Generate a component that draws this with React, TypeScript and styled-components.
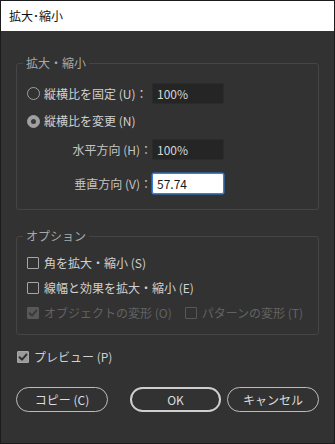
import React from "react";
import styled, { createGlobalStyle, css } from "styled-components";

const GlobalStyle = createGlobalStyle`
  html, body { margin: 0; padding: 0; background: #323232; }
  * { box-sizing: border-box; }
`;

const FONT = `"Noto Sans CJK JP", "Noto Sans", sans-serif`;

const Dialog = styled.div`
  width: 335px;
  height: 444px;
  border: 1px solid #1c1c1c;
  background: #323232;
  display: flex;
  flex-direction: column;
  font-family: ${FONT};
  font-size: 12px;
  color: #d0d0d0;
`;

const TitleBar = styled.div`
  height: 30px;
  flex: none;
  background: #ffffff;
  display: flex;
  align-items: center;
  padding-left: 8px;
  color: #111;
  font-size: 12px;
  line-height: 16px;
`;

const Body = styled.div`
  padding: 24px 15px 0;
  display: flex;
  flex-direction: column;
`;

const Group = styled.fieldset<{ $pb: number; $mt?: number }>`
  margin: ${(p) => p.$mt ?? 0}px 0 0;
  padding: 0 10px ${(p) => p.$pb}px;
  border: 1px solid #454545;
  border-radius: 3px;
  min-width: 0;
`;

const Legend = styled.legend`
  padding: 0 3px;
  margin-left: -4px;
  font-size: 12px;
  line-height: 16px;
  color: #a8a8a8;
`;

const FieldRow = styled.div<{ $mt: number; $h: number }>`
  margin-top: ${(p) => p.$mt}px;
  height: ${(p) => p.$h}px;
  display: grid;
  grid-template-columns: 125px 72px;
  align-items: center;
`;

const Control = styled.label<{ $disabled?: boolean; $ml?: number }>`
  display: flex;
  align-items: center;
  gap: 4px;
  line-height: 16px;
  white-space: nowrap;
  margin-left: ${(p) => p.$ml ?? 0}px;
  color: ${(p) => (p.$disabled ? "#626262" : "#d0d0d0")};
`;

const FieldLabel = styled.span`
  text-align: right;
  line-height: 16px;
  color: #c4c4c4;
  white-space: nowrap;
`;

const Radio = styled.span<{ $checked?: boolean }>`
  width: 13px;
  height: 13px;
  border-radius: 50%;
  flex: none;
  border: 1.5px solid #a0a0a0;
  display: flex;
  align-items: center;
  justify-content: center;
  ${(p) =>
    p.$checked &&
    css`
      background: #a0a0a0;
      &::after {
        content: "";
        width: 5px;
        height: 5px;
        border-radius: 50%;
        background: #3a3a3a;
      }
    `}
`;

const NumberBox = styled.div<{ $focused?: boolean }>`
  height: 100%;
  border-radius: 2px;
  display: flex;
  align-items: center;
  padding-left: 4px;
  font-size: 12px;
  line-height: 16px;
  ${(p) =>
    p.$focused
      ? css`
          background: #ffffff;
          border: 1px solid #2d82e6;
          box-shadow: 0 0 0 0.5px #2d82e6;
          color: #1a1a1a;
        `
      : css`
          background: #252525;
          border: 1px solid #2b2b2b;
          color: #d6d6d6;
        `}
`;

const CheckRow = styled.div<{ $mt: number }>`
  margin-top: ${(p) => p.$mt}px;
  height: 18px;
  display: flex;
  align-items: center;
`;

const PreviewRow = styled.div`
  margin-top: 13px;
  height: 18px;
  padding-left: 1px;
  display: flex;
  align-items: center;
`;

const Box = styled.span<{ $checked?: boolean; $disabled?: boolean }>`
  width: 12px;
  height: 12px;
  flex: none;
  margin-right: 1px;
  border-radius: 1px;
  display: flex;
  align-items: center;
  justify-content: center;
  border: 1px solid ${(p) => (p.$disabled ? "#585858" : "#a6a6a6")};
  background: ${(p) =>
    p.$checked ? (p.$disabled ? "#585858" : "#9a9a9a") : "transparent"};
`;

const ButtonRow = styled.div`
  margin-top: 21px;
  display: flex;
  justify-content: space-between;
`;

const ButtonGroup = styled.div`
  display: flex;
  gap: 6px;
`;

const Button = styled.button<{ $primary?: boolean; $w: number }>`
  width: ${(p) => p.$w}px;
  height: 25px;
  border-radius: 13px;
  background: transparent;
  font-family: ${FONT};
  font-size: 12px;
  line-height: 16px;
  color: #dcdcdc;
  padding: 0;
  border: ${(p) => (p.$primary ? "2px solid #cfcfcf" : "1.5px solid #bdbdbd")};
  display: flex;
  align-items: center;
  justify-content: center;
`;

const Check: React.FC<{ color: string }> = ({ color }) => (
  <svg width="10" height="10" viewBox="0 0 10 10">
    <path
      d="M1.6 5.2 L4 7.6 L8.4 2.6"
      fill="none"
      stroke={color}
      strokeWidth="2"
      strokeLinecap="round"
      strokeLinejoin="round"
    />
  </svg>
);

const CheckBox: React.FC<{ checked?: boolean; disabled?: boolean }> = ({
  checked,
  disabled,
}) => (
  <Box $checked={checked} $disabled={disabled}>
    {checked && <Check color={disabled ? "#3a3a3a" : "#2e2e2e"} />}
  </Box>
);

export default function App() {
  return (
    <>
      <GlobalStyle />
      <Dialog>
        <TitleBar>拡大･縮小</TitleBar>
        <Body>
          <Group $pb={15}>
            <Legend>拡大・縮小</Legend>
            <FieldRow $mt={12} $h={21}>
              <Control>
                <Radio />
                縦横比を固定 (U)：
              </Control>
              <NumberBox>100%</NumberBox>
            </FieldRow>
            <FieldRow $mt={7} $h={20}>
              <Control>
                <Radio $checked />
                縦横比を変更 (N)
              </Control>
            </FieldRow>
            <FieldRow $mt={8} $h={21}>
              <FieldLabel>水平方向 (H)：</FieldLabel>
              <NumberBox>100%</NumberBox>
            </FieldRow>
            <FieldRow $mt={13} $h={21}>
              <FieldLabel>垂直方向 (V)：</FieldLabel>
              <NumberBox $focused>57.74</NumberBox>
            </FieldRow>
          </Group>

          <Group $pb={12} $mt={18}>
            <Legend>オプション</Legend>
            <CheckRow $mt={10}>
              <Control>
                <CheckBox />
                角を拡大・縮小 (S)
              </Control>
            </CheckRow>
            <CheckRow $mt={7}>
              <Control>
                <CheckBox />
                線幅と効果を拡大・縮小 (E)
              </Control>
            </CheckRow>
            <CheckRow $mt={7}>
              <Control $disabled>
                <CheckBox checked disabled />
                オブジェクトの変形 (O)
              </Control>
              <Control $disabled $ml={13}>
                <CheckBox disabled />
                パターンの変形 (T)
              </Control>
            </CheckRow>
          </Group>

          <PreviewRow>
            <Control>
              <CheckBox checked />
              プレビュー (P)
            </Control>
          </PreviewRow>

          <ButtonRow>
            <Button $w={92}>コピー (C)</Button>
            <ButtonGroup>
              <Button $w={91} $primary>
                OK
              </Button>
              <Button $w={92}>キャンセル</Button>
            </ButtonGroup>
          </ButtonRow>
        </Body>
      </Dialog>
    </>
  );
}
